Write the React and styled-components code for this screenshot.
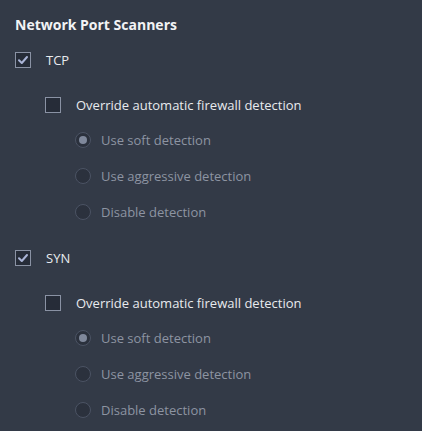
import React from "react";
import styled, { createGlobalStyle } from "styled-components";

const GlobalStyle = createGlobalStyle`
  html, body {
    margin: 0;
    padding: 0;
    background: #333a47;
  }
  body {
    font-family: "Open Sans", "Noto Sans", sans-serif;
  }
`;

const scanners = ["TCP", "SYN"];
const modes = ["Use soft detection", "Use aggressive detection", "Disable detection"];

const Check = ({ checked }) => (
  <CheckBox $checked={checked}>
    {checked && (
      <svg width="12" height="12" viewBox="0 0 12 12">
        <path d="M2 6.3 L4.8 9 L10 3" fill="none" stroke="#aab4d6" strokeWidth="2" strokeLinecap="round" strokeLinejoin="round" />
      </svg>
    )}
  </CheckBox>
);

const App = () => {
  return (
    <>
      <GlobalStyle />
      <Panel>
        <Title>Network Port Scanners</Title>
        {scanners.map((name) => (
          <Group key={name}>
            <Row>
              <Check checked />
              <Label>{name}</Label>
            </Row>
            <Nested>
              <Row>
                <Check />
                <Label>Override automatic firewall detection</Label>
              </Row>
              <Radios>
                {modes.map((m, i) => (
                  <RadioRow key={m}>
                    <Radio $selected={i === 0} />
                    <Label $disabled>{m}</Label>
                  </RadioRow>
                ))}
              </Radios>
            </Nested>
          </Group>
        ))}
      </Panel>
    </>
  );
};

export default App;

const Panel = styled.div`
  width: 422px;
  height: 431px;
  box-sizing: border-box;
  padding: 15px 15px 0;
  overflow: hidden;
  background: #333a47;
`;

const Title = styled.div`
  font-size: 14px;
  font-weight: 700;
  color: #f2f3f5;
  line-height: 19px;
  margin-bottom: 18px;
`;

const Group = styled.div`
  display: flex;
  flex-direction: column;
  margin-bottom: 30px;
`;

const Nested = styled.div`
  padding-left: 30px;
  margin-top: 29px;
  display: flex;
  flex-direction: column;
`;

const Row = styled.div`
  display: flex;
  align-items: center;
  gap: 15px;
  height: 16px;
`;

const CheckBox = styled.div`
  width: 16px;
  height: 16px;
  box-sizing: border-box;
  border: 1px solid #8a92a4;
  background: #262c38;
  display: flex;
  align-items: center;
  justify-content: center;
  flex-shrink: 0;
`;

const Label = styled.span`
  font-size: 13px;
  color: ${(p) => (p.$disabled ? "#8d94a2" : "#e8eaee")};
  white-space: nowrap;
`;

const Radios = styled.div`
  display: flex;
  flex-direction: column;
  gap: 20px;
  padding-left: 30px;
  margin-top: 19px;
`;

const RadioRow = styled.div`
  display: flex;
  align-items: center;
  gap: 10px;
  height: 16px;
`;

const Radio = styled.div`
  width: 16px;
  height: 16px;
  box-sizing: border-box;
  border-radius: 50%;
  border: 1px solid #4b5364;
  background: #2b313d;
  flex-shrink: 0;
  display: flex;
  align-items: center;
  justify-content: center;

  &::after {
    content: "";
    display: ${(p) => (p.$selected ? "block" : "none")};
    width: 8px;
    height: 8px;
    border-radius: 50%;
    background: #7f889b;
  }
`;
